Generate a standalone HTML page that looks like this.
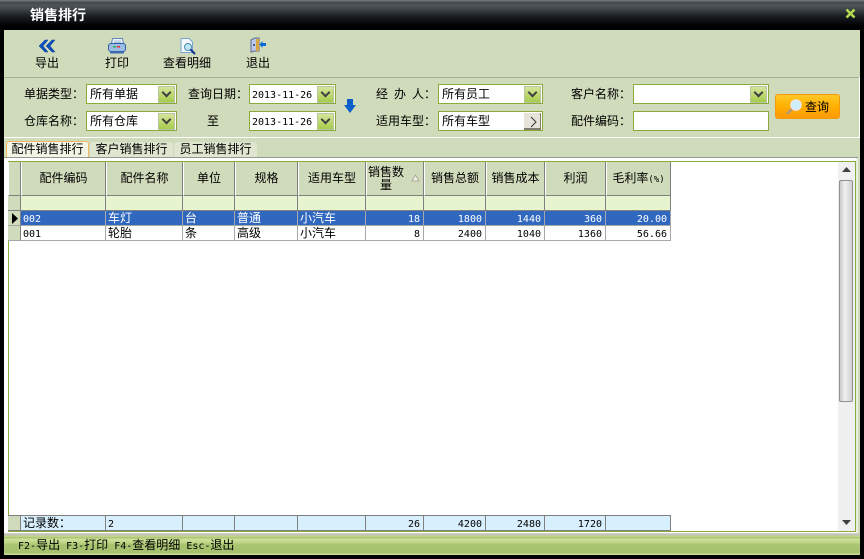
<!DOCTYPE html>
<html><head><meta charset="utf-8">
<style>
html,body{margin:0;padding:0;background:#000}
#p{position:relative;width:864px;height:559px;overflow:hidden;background:#000;font:12px/14px "WenQuanYi Zen Hei","Noto Sans CJK SC",sans-serif;color:#000}
#p div{position:absolute;white-space:nowrap}
#p svg{position:absolute}
i{font:normal 10px/14px "DejaVu Sans Mono",monospace}
.t{height:14px;line-height:14px}
.b{background:#fff;border:1px solid #8aaa3c;box-sizing:border-box;height:20px}
.b span{position:absolute;left:3px;top:2px}
.a{right:1px;top:1px;width:17px;height:17px;background:linear-gradient(#d6e59c,#a6cc4c);box-sizing:border-box;border:1px solid #b9c5a0}
.a:after{content:"";position:absolute;left:3px;top:3px;width:5px;height:5px;border:solid #404040;border-width:0 2px 2px 0;transform:translate(1px,-1px) rotate(45deg)}
.h{background:#d0dbbb;border-right:1px solid #808080;border-bottom:1px solid #808080;box-sizing:border-box;border-left:1px solid #fff;text-align:center;top:162px;height:34px;line-height:32px}
.f{background:#e6f5d0;border-right:1px solid #808080;border-bottom:1px solid #808080;box-sizing:border-box;top:196px;height:15px}
.c{box-sizing:border-box;border-right:1px solid #a8a8a8;border-bottom:1px solid #a8a8a8;height:15px;line-height:14px;padding:0 3px 0 2px}
.s{background:#3068c0;color:#fff;top:211px}
.w{background:#fff;top:226px}
.r{text-align:right}
.z{background:#d8f0fe;border-right:1px solid #808080;border-bottom:1px solid #808080;border-top:1px solid #808080;box-sizing:border-box;top:515px;height:16px;line-height:14px;padding:0 3px 0 2px}
.m{background:#d0dbbb;border-right:1px solid #808080;border-bottom:1px solid #a8a8a8;box-sizing:border-box;left:8px;width:13px;height:15px}
</style></head><body><div id="p">
<div style="left:0;top:0;width:864px;height:30px;background:linear-gradient(#6c7478 0,#6c7478 1px,#43494d 2px,#4e5559 6px,#1a2024 16px,#000 26px,#000 100%)"></div>
<div class="t" style="left:30px;top:8px;color:#fff;font-weight:bold;font-size:14px">销售排行</div>
<svg style="left:845px;top:8px" width="11" height="11" viewBox="0 0 11 11"><path d="M1.5 1.5L9.5 9.5M9.5 1.5L1.5 9.5" stroke="#b4da50" stroke-width="2.6"/></svg>

<div style="left:4px;top:30px;width:856px;height:503px;background:#d0dbbb"></div>
<div style="left:4px;top:77px;width:855px;height:1px;background:#a9ac94"></div>
<div style="left:4px;top:137px;width:855px;height:1px;background:#fff"></div>
<div style="left:859px;top:77px;width:1px;height:61px;background:#fff"></div>

<svg style="left:38px;top:39px" width="18" height="14" viewBox="0 0 18 14"><path d="M7 1L1 7L7 13H10L5 7L10 1ZM14 1L8 7L14 13H17L12 7L17 1Z" fill="#0a50b8" stroke="#0a3f9a" stroke-width=".5"/></svg>
<div class="t" style="left:35px;top:56px">导出</div>
<svg style="left:108px;top:38px" width="18" height="16" viewBox="0 0 18 16"><path d="M4.5 .5H14.5L15.5 6H3.5Z" fill="#eef3f8" stroke="#5f86b8"/><path d="M6 3H13M6 4.5H13" stroke="#a9c0dc"/><rect x=".5" y="5.5" width="17" height="8" rx="2.5" fill="#9dbce4" stroke="#2f5ea8"/><rect x="5" y="8" width="3" height="1.5" fill="#30b050"/><rect x="9" y="8" width="3" height="1.5" fill="#e83030"/><path d="M2 13.5H16V15.5H2Z" fill="#3f6cb4"/></svg>
<div class="t" style="left:105px;top:56px">打印</div>
<svg style="left:180px;top:38px" width="16" height="17" viewBox="0 0 16 17"><path d="M1 .5H9L12.5 4V14.5H1Z" fill="#f4f8fc" stroke="#7aa4d2"/><circle cx="8" cy="9" r="3.5" fill="#bfe8f4" stroke="#4c8ca8"/><path d="M10.5 11.5L15 16" stroke="#12308c" stroke-width="2"/></svg>
<div class="t" style="left:163px;top:56px">查看明细</div>
<svg style="left:250px;top:37px" width="16" height="17" viewBox="0 0 16 17"><path d="M1 3L5 1H9V14H5L1 15Z" fill="#bcc8e4" stroke="#5a6a9a"/><path d="M6 2H9V14H6Z" fill="#d9a83c"/><path d="M9.5 7.5L12.5 4V6H16V9H12.5V11Z" fill="#0a68d8"/><circle cx="4" cy="8" r="1" fill="#30406c"/></svg>
<div class="t" style="left:246px;top:56px">退出</div>

<div class="t" style="left:24px;top:87px">单据类型：</div>
<div class="t" style="left:24px;top:114px">仓库名称：</div>
<div class="b" style="left:86px;top:84px;width:91px"><span>所有单据</span><div class="a"></div></div>
<div class="b" style="left:86px;top:111px;width:91px"><span>所有仓库</span><div class="a"></div></div>
<div class="t" style="left:188px;top:87px">查询日期：</div>
<div class="t" style="left:207px;top:114px">至</div>
<div class="b" style="left:249px;top:84px;width:87px"><span style="left:2px"><i>2013-11-26</i></span><div class="a"></div></div>
<div class="b" style="left:249px;top:111px;width:87px"><span style="left:2px"><i>2013-11-26</i></span><div class="a"></div></div>
<svg style="left:344px;top:99px" width="12" height="14" viewBox="0 0 12 14"><path d="M3 0H9V6H12L6 14L0 6H3Z" fill="#0a60c8"/></svg>
<div class="t" style="left:376px;top:87px">经<span style="margin-left:6px">办</span><span style="margin-left:6px">人</span>：</div>
<div class="t" style="left:376px;top:114px">适用车型：</div>
<div class="b" style="left:438px;top:84px;width:105px"><span>所有员工</span><div class="a"></div></div>
<div class="b" style="left:438px;top:111px;width:105px"><span>所有车型</span><div style="right:1px;top:1px;width:17px;height:17px;background:#e6e4d8;border-right:1px solid #807c70;border-bottom:2px solid #807c70;box-sizing:border-box"></div><svg style="right:4px;top:4px" width="9" height="12" viewBox="0 0 9 12"><path d="M2 1L7 6L2 11" fill="none" stroke="#333" stroke-width="1"/></svg></div>
<div class="t" style="left:571px;top:87px">客户名称：</div>
<div class="t" style="left:571px;top:114px">配件编码：</div>
<div class="b" style="left:633px;top:84px;width:136px"><div class="a"></div></div>
<div class="b" style="left:633px;top:111px;width:136px"></div>
<div style="left:775px;top:94px;width:65px;height:25px;border-radius:3px;background:linear-gradient(#ffc828,#ffb000 50%,#ff9a08);box-sizing:border-box;border:1px solid #f29a10"></div>
<svg style="left:785px;top:98px" width="18" height="18" viewBox="0 0 18 18"><path d="M7 11L2 16" stroke="#b89a70" stroke-width="3"/><circle cx="11" cy="7" r="5" fill="#cfeeff" stroke="#e8e8f0" stroke-width="1.5"/></svg>
<div class="t" style="left:805px;top:100px">查询</div>

<div style="left:6px;top:141px;width:83px;height:16px;background:#f2f5e6;border:1px solid #f0b860;border-bottom:0;border-radius:3px 3px 0 0;box-sizing:border-box;text-align:center;line-height:14px">配件销售排行</div>
<div style="left:90px;top:142px;width:83px;height:15px;background:#dfe6cf;border-radius:3px 3px 0 0;text-align:center;line-height:14px">客户销售排行</div>
<div style="left:174px;top:142px;width:83px;height:15px;background:#dfe6cf;border-radius:3px 3px 0 0;text-align:center;line-height:14px">员工销售排行</div>

<div style="left:4px;top:157px;width:854px;height:1px;background:#8f9a94"></div>
<div style="left:4px;top:158px;width:854px;height:375px;background:#fff"></div>
<div style="left:8px;top:161px;width:848px;height:371px;box-sizing:border-box;border:1px solid #8aaa3c;background:#fff"></div>
<div style="left:856px;top:158px;width:2px;height:375px;background:#e8eee0"></div>

<div class="h" style="left:8px;width:13px"></div>
<div class="h" style="left:21px;width:85px">配件编码</div>
<div class="h" style="left:106px;width:77px">配件名称</div>
<div class="h" style="left:183px;width:52px">单位</div>
<div class="h" style="left:235px;width:63px">规格</div>
<div class="h" style="left:298px;width:68px">适用车型</div>
<div class="h" style="left:366px;width:58px;line-height:13px;padding-top:3px;text-align:left"><span style="display:block;width:38px;text-align:center">销售数<br>量</span></div>
<svg style="left:411px;top:174px" width="9" height="8" viewBox="0 0 9 8"><path d="M4.5 1L8 7H1Z" fill="#f0f0e8" stroke="#a0a090" stroke-width=".8"/></svg>
<div class="h" style="left:424px;width:62px">销售总额</div>
<div class="h" style="left:486px;width:59px">销售成本</div>
<div class="h" style="left:545px;width:61px">利润</div>
<div class="h" style="left:606px;width:65px">毛利率<i style="font-size:9px">(%)</i></div>

<div class="f" style="left:8px;width:13px;background:#d0dbbb"></div>
<div class="f" style="left:21px;width:85px"></div>
<div class="f" style="left:106px;width:77px"></div>
<div class="f" style="left:183px;width:52px"></div>
<div class="f" style="left:235px;width:63px"></div>
<div class="f" style="left:298px;width:68px"></div>
<div class="f" style="left:366px;width:58px"></div>
<div class="f" style="left:424px;width:62px"></div>
<div class="f" style="left:486px;width:59px"></div>
<div class="f" style="left:545px;width:61px"></div>
<div class="f" style="left:606px;width:65px"></div>

<div class="m" style="top:211px"></div>
<svg style="left:12px;top:213px" width="7" height="11" viewBox="0 0 7 11"><path d="M0 0L6 5.5L0 11Z" fill="#000"/></svg>
<div class="c s" style="left:21px;width:85px"><i>002</i></div>
<div class="c s" style="left:106px;width:77px">车灯</div>
<div class="c s" style="left:183px;width:52px">台</div>
<div class="c s" style="left:235px;width:63px">普通</div>
<div class="c s" style="left:298px;width:68px">小汽车</div>
<div class="c s r" style="left:366px;width:58px"><i>18</i></div>
<div class="c s r" style="left:424px;width:62px"><i>1800</i></div>
<div class="c s r" style="left:486px;width:59px"><i>1440</i></div>
<div class="c s r" style="left:545px;width:61px"><i>360</i></div>
<div class="c s r" style="left:606px;width:65px"><i>20.00</i></div>

<div class="m" style="top:226px"></div>
<div class="c w" style="left:21px;width:85px"><i>001</i></div>
<div class="c w" style="left:106px;width:77px">轮胎</div>
<div class="c w" style="left:183px;width:52px">条</div>
<div class="c w" style="left:235px;width:63px">高级</div>
<div class="c w" style="left:298px;width:68px">小汽车</div>
<div class="c w r" style="left:366px;width:58px"><i>8</i></div>
<div class="c w r" style="left:424px;width:62px"><i>2400</i></div>
<div class="c w r" style="left:486px;width:59px"><i>1040</i></div>
<div class="c w r" style="left:545px;width:61px"><i>1360</i></div>
<div class="c w r" style="left:606px;width:65px"><i>56.66</i></div>

<div class="z" style="left:8px;width:13px;background:#d0dbbb"></div>
<div class="z" style="left:21px;width:85px">记录数：</div>
<div class="z" style="left:106px;width:77px"><i>2</i></div>
<div class="z" style="left:183px;width:52px"></div>
<div class="z" style="left:235px;width:63px"></div>
<div class="z" style="left:298px;width:68px"></div>
<div class="z r" style="left:366px;width:58px"><i>26</i></div>
<div class="z r" style="left:424px;width:62px"><i>4200</i></div>
<div class="z r" style="left:486px;width:59px"><i>2480</i></div>
<div class="z r" style="left:545px;width:61px"><i>1720</i></div>
<div class="z" style="left:606px;width:65px"></div>

<div style="left:838px;top:162px;width:17px;height:369px;background:#f0f0f0"></div>
<svg style="left:842px;top:167px" width="9" height="6" viewBox="0 0 9 6"><path d="M4.5 0L9 5H0Z" fill="#404040"/></svg>
<div style="left:839px;top:180px;width:14px;height:222px;box-sizing:border-box;border:1px solid #909090;border-radius:2px;background:linear-gradient(90deg,#c8c8c8,#f0f0f0 40%,#d0d0d0)"></div>
<svg style="left:842px;top:520px" width="9" height="6" viewBox="0 0 9 6"><path d="M0 0H9L4.5 5Z" fill="#404040"/></svg>

<div style="left:4px;top:533px;width:856px;height:22px;background:linear-gradient(#d8d8d0 0,#bcbcb4 2px,#c8dc90 3px,#a8c070 5px,#cfe29a 6px,#c0d888 9px,#a8c470 12px,#a6c26e 20px,#c8dc90 21px)"></div>
<div class="t" style="left:18px;top:538px"><i>F2-</i>导出<i> F3-</i>打印<i> F4-</i>查看明细<i> Esc-</i>退出</div>
</div></body></html>
